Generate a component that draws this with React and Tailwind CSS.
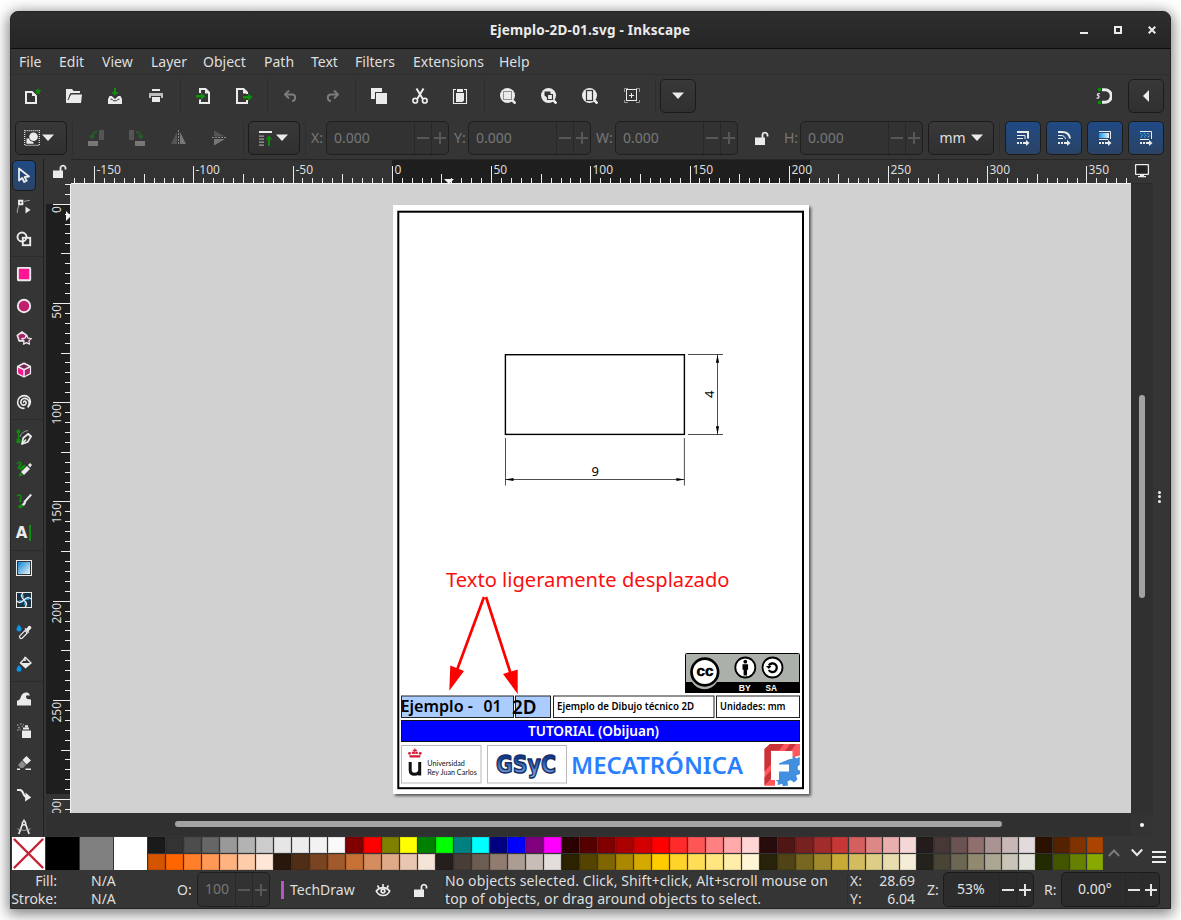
import React from "react";

const FG = "#ebebeb";
const GREEN = "#0d8f0d";

function Svg({ children, className = "w-4 h-4", box = "0 0 16 16" }) {
  return (
    <svg className={`block shrink-0 ${className}`} viewBox={box} fill="none">
      {children}
    </svg>
  );
}

const dashArrow = (
  <>
    <path d="M2 13h2M5 13h2M8 13h4" stroke={FG} strokeWidth="2" />
    <path d="M11 10l3.500 3-3.500 3z" fill={FG} />
  </>
);

const icons = {
  fileNew: (
    <Svg>
      <path d="M1 4h6l4 4v7H1z" stroke={FG} strokeWidth="2" />
      <path d="M7 4v4h4z" fill={FG} />
      <path d="M13 0l1 2.100 2.300.3-1.700 1.600.5 2.400-2.100-1.200-2.100 1.200.5-2.400L9.700 2.400l2.300-.3z" fill={GREEN} />
    </Svg>
  ),
  open: (
    <Svg>
      <path d="M0 1h6l1.500 2H14v2H4.500L3 8.500v4L0 15z" fill={FG} />
      <path d="M5 6.500h11L15 15H0z" fill={FG} />
      <path d="M4.500 6l-2.500 6" stroke="#353535" strokeWidth="1" />
    </Svg>
  ),
  save: (
    <Svg>
      <path d="M7 0h2v4h2.700L8 7.800 4.300 4H7z" fill={GREEN} />
      <path d="M2.500 8h2.200L8 11l3.300-3h2.200L15 11v5H1v-5z" fill={FG} />
      <path d="M3.500 11.200h1.500l1.500 1.600h3l1.500-1.600h1.500" stroke="#353535" strokeWidth="1" />
    </Svg>
  ),
  print: (
    <Svg>
      <path d="M4 1h8v2H4z" fill={FG} />
      <path d="M1 5h14v5h-2V8H3v2H1z" fill="#bdbdbd" />
      <path d="M4 9h8v5H4z" fill={FG} />
    </Svg>
  ),
  importIcon: (
    <Svg>
      <path d="M4 5V1h5.500L13 4.500V15H4v-3.500" stroke={FG} strokeWidth="2" />
      <path d="M9 1v4.500h5z" fill={FG} />
      <path d="M0 7h5V4.500l4.500 3.700L5 12V9.400H0z" fill={GREEN} />
    </Svg>
  ),
  exportIcon: (
    <Svg>
      <path d="M11 6V4.500L7.500 1H1v14h10v-3" stroke={FG} strokeWidth="2" />
      <path d="M7 1v4.500h5z" fill={FG} />
      <path d="M7 8h5V5.500l4.500 3.700L12 13v-2.600H7z" fill={GREEN} />
    </Svg>
  ),
  undo: (
    <Svg>
      <path d="M3 6.500h6.500a3.300 3.300 0 0 1 0 6.500H9" stroke="#7c7c7c" strokeWidth="1.900" />
      <path d="M6 2.500L2 6.500l4 4" stroke="#7c7c7c" strokeWidth="1.900" />
    </Svg>
  ),
  redo: (
    <Svg>
      <path d="M13 6.500H6.500a3.300 3.300 0 0 0 0 6.500H7" stroke="#7c7c7c" strokeWidth="1.900" />
      <path d="M10 2.500l4 4-4 4" stroke="#7c7c7c" strokeWidth="1.900" />
    </Svg>
  ),
  copy: (
    <Svg>
      <path d="M0 0h11v4H4v7H0z" fill={FG} />
      <path d="M5 5h11v11H5z" fill={FG} />
    </Svg>
  ),
  cut: (
    <Svg>
      <path d="M4.500 .5L10.800 11M11.500 .5L5.200 11" stroke={FG} strokeWidth="2" />
      <circle cx="3.200" cy="12.700" r="2.300" stroke={FG} strokeWidth="1.700" />
      <circle cx="12.800" cy="12.700" r="2.300" stroke={FG} strokeWidth="1.700" />
    </Svg>
  ),
  paste: (
    <Svg>
      <path d="M4 1.500H1.500v14h13v-14H12" stroke={FG} strokeWidth="1.100" />
      <path d="M4 5h8v7.500L10.500 14H4zM5 1h6v3H5z" fill={FG} />
    </Svg>
  ),
  zoomSel: (
    <Svg>
      <circle cx="7.500" cy="7.500" r="7.500" fill={FG} />
      <path d="M12 12l3.500 3.500" stroke={FG} strokeWidth="2.600" />
      <rect x="3.500" y="3.500" width="8" height="8" stroke="#353535" strokeDasharray="1 1" />
    </Svg>
  ),
  zoomDraw: (
    <Svg>
      <circle cx="7.500" cy="7.500" r="7.500" fill={FG} />
      <path d="M12 12l3.500 3.500" stroke={FG} strokeWidth="2.600" />
      <path d="M3.500 3.500h6v2.500H6v3.500L3.500 7.500z" fill="#353535" />
      <path d="M6.500 6.500h5v5h-5z" fill={FG} stroke="#353535" strokeWidth="1.200" />
    </Svg>
  ),
  zoomPage: (
    <Svg>
      <circle cx="7.500" cy="7.500" r="7.500" fill={FG} />
      <path d="M12 12l3.500 3.500" stroke={FG} strokeWidth="2.600" />
      <rect x="4.500" y="2.500" width="6" height="10" stroke="#353535" strokeWidth="1.200" />
    </Svg>
  ),
  zoomCenter: (
    <Svg>
      <path d="M.5 4V.5H4M12 .5h3.500V4M15.500 12v2.500H12M4 14.500H.5V12" stroke="#9a9a9a" />
      <rect x="2.500" y="1.500" width="10" height="11" stroke={FG} />
      <path d="M7.500 5v5M5 7.500h5" stroke={FG} strokeWidth="1" />
    </Svg>
  ),
  snap: (
    <Svg>
      <path d="M6 1.700h3a6.200 6.200 0 0 1 0 12.600H6" stroke={FG} strokeWidth="3" />
      <path d="M2 0h3v3H2zM2 13h3v3H2z" fill={GREEN} />
      <path d="M3.800 5.700C1.300 5.300.8 7 2.200 7.700S3.300 10.300.6 10" stroke={FG} strokeWidth="1.300" />
    </Svg>
  ),
  selectMode: (
    <Svg>
      <rect x=".7" y=".7" width="14.600" height="14.600" stroke={FG} strokeWidth="1.200" strokeDasharray="1 1" />
      <circle cx="9.500" cy="6.800" r="4.300" fill={FG} />
      <path d="M2.500 8.500h2.500c.5 2 2 3.200 4.500 3.500v1.800h-7z" fill={FG} />
    </Svg>
  ),
  rotateL: (
    <Svg>
      <path d="M11 0h5v10h-5z" fill="#555" />
      <path d="M0 11h10v5H0z" fill="#777" />
      <path d="M4 8C4 4 5.500 2 9 2" stroke="#275c27" strokeWidth="1.800" />
      <path d="M1 5.500h6.500L4 9.500z" fill="#275c27" />
    </Svg>
  ),
  rotateR: (
    <Svg>
      <path d="M0 0h5v10H0z" fill="#555" />
      <path d="M6 11h10v5H6z" fill="#777" />
      <path d="M7 2c3.500 0 5 2 5 6" stroke="#275c27" strokeWidth="1.800" />
      <path d="M8.500 5.500H15l-3.500 4z" fill="#275c27" />
    </Svg>
  ),
  flipH: (
    <Svg>
      <path d="M6 2v12H0z" fill="#555" />
      <path d="M9 2v12h6z" fill="#777" />
      <path d="M7.500 0v15" stroke="#8a8a8a" strokeDasharray="2 1" />
    </Svg>
  ),
  flipV: (
    <Svg>
      <path d="M3 .5v6h11z" fill="#555" />
      <path d="M3 9v6.500l11-6.500z" fill="#777" />
      <path d="M1 7.500h14" stroke="#8a8a8a" strokeDasharray="2 1" />
    </Svg>
  ),
  raise: (
    <Svg>
      <path d="M1 2h13" stroke={FG} strokeWidth="2" />
      <path d="M1 6.200h5M1 9.200h5M1 12.200h5M1 15.200h5" stroke="#a0a0a0" strokeWidth="1.300" />
      <path d="M10 16V9.500H8l3-4.500 3 4.500h-2V16z" fill={GREEN} />
    </Svg>
  ),
  lock: (
    <Svg>
      <path d="M1 7.500h10V15H1z" fill={FG} />
      <path d="M8.500 8V4.500a2.600 2.600 0 0 1 5 0V6.500" stroke={FG} strokeWidth="1.800" />
    </Svg>
  ),
  monitor: (
    <Svg>
      <rect x="1.600" y="1.600" width="12.800" height="9.800" rx=".5" fill="#222" stroke={FG} strokeWidth="1.300" />
      <path d="M6 12h4v1h2v1.200H4V13h2z" fill={FG} />
    </Svg>
  ),
  selector: (
    <Svg>
      <path d="M3 1.500v12l3.200-2.500 2 4 2.500-1.200-2-3.800 4.300-.5z" stroke={FG} strokeWidth="1.800" strokeLinejoin="round" />
    </Svg>
  ),
  node: (
    <Svg>
      <path d="M3 1.800h3.400v3.400H3z" stroke={FG} strokeWidth="1.900" />
      <path d="M3 6C1.800 8.500 1.300 11 1.300 14M8 2.500c3-.8 4.500-1 6-1.200" stroke="#9a9a9a" strokeWidth="1.100" />
      <path d="M9.500 7.500l5 3.500-5 3.500z" fill={FG} />
    </Svg>
  ),
  builder: (
    <Svg>
      <circle cx="6" cy="6" r="4.500" stroke={FG} strokeWidth="1.900" />
      <rect x="6.800" y="6.800" width="7.400" height="7.400" stroke={FG} strokeWidth="1.900" />
    </Svg>
  ),
  rect: (
    <Svg>
      <rect x="1.900" y="1.900" width="12.300" height="12.300" rx=".5" fill="#ff1493" stroke={FG} strokeWidth="1.900" />
    </Svg>
  ),
  circle: (
    <Svg>
      <circle cx="8" cy="8" r="6.200" fill="#c2206f" stroke={FG} strokeWidth="1.900" />
    </Svg>
  ),
  star: (
    <Svg>
      <path d="M6 2l4.700 3.400-1.800 5.500H3.200L1.300 5.400z" fill="#a8246b" stroke={FG} strokeWidth="1.600" strokeLinejoin="round" />
      <path d="M10.500 5.200l1.500 2.900 3.300.5-2.400 2.300.6 3.300-3-1.600-3 1.600.6-3.300-2.400-2.300 3.300-.5z" fill="#5a2748" stroke={FG} strokeWidth="1.200" strokeLinejoin="round" />
    </Svg>
  ),
  cube: (
    <Svg>
      <path d="M8 1.200l6.300 3.300v7L8 14.900l-6.300-3.400v-7z" fill="#7a2355" stroke={FG} strokeWidth="1.600" strokeLinejoin="round" />
      <path d="M2.300 5.200L8 8v6.300l-5.700-3.100z" fill="#ff1493" />
      <path d="M13.700 5.200L8 8v6.300l5.700-3.100z" fill="#a8246b" />
      <path d="M2 4.700L8 7.700l6-3M8 7.700v7" stroke={FG} strokeWidth="1.600" />
    </Svg>
  ),
  spiral: (
    <Svg>
      <path
        d="M8 8.700c-.9-.7 0-2 1.200-1.500 1.700.8 1.100 3.300-.6 3.800-2.400.7-4.300-1.500-3.700-3.800.8-2.700 4-3.600 6.300-2.100 2.600 1.800 2.600 5.600.5 7.700M8.600 14.300c-4 .6-7-2.300-7-6 0-3.800 3-6.800 6.800-6.700 3.500.1 6.100 3 6 6.400-.1 2.400-1 4.200-2.700 5.500"
        stroke={FG}
        strokeWidth="1.600"
      />
    </Svg>
  ),
  pen: (
    <Svg>
      <path d="M2.500 3v10" stroke={GREEN} strokeWidth="1.500" />
      <circle cx="2.500" cy="2.500" r="2" fill={GREEN} />
      <path d="M.5 10h4v4h-4z" fill={GREEN} />
      <path d="M4 8c1-4 3.500-5.500 8-6.500" stroke="#999" />
      <path d="M6 15l1.200-6 4.800-4 3 2.500-3.300 5.500z" stroke={FG} strokeWidth="1.700" strokeLinejoin="round" />
      <path d="M6 15l4-4.500M12 4.500l3.500 3.500" stroke={FG} strokeWidth="1.600" />
    </Svg>
  ),
  pencil: (
    <Svg>
      <path d="M1 3c2-2.500 5-2 3.500.5S1 7 3 7.500 7 4 8.500 4.500 5 8 4.500 9.500" stroke={GREEN} strokeWidth="1.500" />
      <path d="M5 11l6-6 3 3-6 6z" fill={FG} />
      <path d="M12 4l2-2 2 2-2 2.500z" fill={FG} />
      <path d="M2.500 15.500l1.300-4.300L7.300 14.500z" fill={GREEN} />
    </Svg>
  ),
  brush: (
    <Svg>
      <path d="M1 3c2.500-2 4.500-.5 4 1.500S3 8 5 9" stroke={GREEN} strokeWidth="1.500" />
      <path d="M8 9.500L15.200 1.500" stroke={FG} strokeWidth="2" />
      <path d="M5.500 11.500L9 8.500l1.200 1.200L8 13z" fill={FG} />
      <path d="M2 14.500c.5-2.500 2-3.500 3.500-3l2 2c-1 1.500-3 2-5.500 1z" fill={GREEN} />
    </Svg>
  ),
  text: (
    <span className="-ml-px flex items-center gap-[2px]">
      <span className="font-['DejaVu_Sans',sans-serif] text-[15px] leading-none font-black text-[#ebebeb]">A</span>
      <span className="h-4 w-[2px] bg-[#0d8f0d]" />
    </span>
  ),
  gradient: (
    <Svg>
      <defs>
        <linearGradient id="gr" x1="0" y1="0" x2="1" y2="1">
          <stop offset="0" stopColor="#0a84d0" />
          <stop offset="1" stopColor="#eef6fa" />
        </linearGradient>
      </defs>
      <rect x=".5" y=".5" width="15" height="15" stroke={FG} />
      <rect x="2" y="2" width="12" height="12" fill="url(#gr)" />
    </Svg>
  ),
  mesh: (
    <Svg>
      <rect x=".5" y=".5" width="15" height="15" fill="#1a3442" stroke={FG} />
      <path d="M8 8l-4-5h4zM8 8l5-4v4zM8 8l4 5H8zM8 8l-5 4V8z" fill="#1d8fd0" />
      <path d="M8 8C5 5.500 5 3 7 .8M8 8c2.500-3 5-3 7.200-1M8 8c3 2.500 3 5 1 7.200M8 8c-2.500 3-5 3-7.200 1" stroke={FG} strokeWidth="1.300" />
    </Svg>
  ),
  dropper: (
    <Svg>
      <path d="M3 .5c1.500 2 2.500 3.300 2.500 4.500a2.500 2.500 0 0 1-5 0C.5 3.800 1.500 2.500 3 .5z" fill="#0b93e8" />
      <path d="M4 14c-.8-.8-.5-1.800 0-2.300l5-5 2.300 2.300-5 5c-.6.500-1.600.7-2.300 0z" stroke={FG} strokeWidth="1.200" />
      <path d="M8.500 5l1-1 1 .8L12.500 2c1-1 3.500.5 2.700 2.500L12.500 7l.8 1-1 1z" fill={FG} />
    </Svg>
  ),
  bucket: (
    <Svg>
      <path d="M3 9c1.500 2 2.500 3.200 2.500 4.300a2.500 2.500 0 0 1-5 0C.5 12.200 1.500 11 3 9z" fill="#0b93e8" />
      <path d="M9.500 1.500L15 7l-5.500 4.500L4.500 7z" stroke={FG} strokeWidth="1.400" />
      <path d="M5 7h10l-5.500 4.700zM8.500 0L10 5H8z" fill={FG} />
    </Svg>
  ),
  tweak: (
    <Svg>
      <path d="M1 14.500V9.500c3 0 3-2 4-4C6 2.500 8.500 1 11 1.500c2 .4 3 2 2.500 3.500-1-1.300-3.500-1-3.500.8C10 8 12 8.500 15 8.500v6z" fill={FG} />
    </Svg>
  ),
  spray: (
    <Svg>
      <path d="M6 7.500h9V15H6zM7 4.500h6v2H7zM9 2.200h3v2H9z" fill={FG} />
      <path d="M1 2h1.500M4 1h1.500M2 4.500h2M1 7h1.500M5.500 3.500H7M3.500 6.500H5M7 1.500h1" stroke="#8a8a8a" strokeWidth="1.400" />
    </Svg>
  ),
  eraser: (
    <Svg>
      <path d="M10.500 1L15 5.500l-4.500 4L6.500 5z" fill={FG} />
      <path d="M6 5.500L10 10l-3 3H4.500L2 10z" fill="#8c8c8c" />
      <path d="M1 14.200h3M9.500 14.200H15" stroke={FG} strokeWidth="1.600" />
    </Svg>
  ),
  connector: (
    <Svg>
      <path d="M1 3h3c4 0 2.500 7 7 7.500" stroke={FG} strokeWidth="2" />
      <path d="M9.500 5.500l5.700 5-6.200 4z" fill={FG} />
    </Svg>
  ),
  measure: (
    <Svg>
      <path d="M6.700 4.500L2.800 15M9.300 4.500L13.200 15M8 .5v2" stroke={FG} strokeWidth="1.700" />
      <circle cx="8" cy="4.200" r="1.700" stroke={FG} strokeWidth="1.500" />
      <path d="M1.500 9.800c4 2 9 2 13 0" stroke="#aaa" />
    </Svg>
  ),
  scaleStroke: (
    <Svg>
      <path d="M2 2h11v6.500" stroke={FG} strokeWidth="2" />
      <path d="M2 5.500h8V9M2 8.500h6" stroke={FG} strokeWidth="1" />
      {dashArrow}
    </Svg>
  ),
  scaleCorner: (
    <Svg>
      <path d="M2 2h4c5 0 7.500 2 8 6.500" stroke={FG} strokeWidth="2" />
      <path d="M2 5.500h3c2.500 0 4 1 4.500 3.500M2 8.500h5" stroke={FG} strokeWidth="1" />
      {dashArrow}
    </Svg>
  ),
  scaleGradient: (
    <Svg>
      <defs>
        <linearGradient id="gs">
          <stop offset="0" stopColor="#1597e8" />
          <stop offset="1" stopColor="#e8f4fa" />
        </linearGradient>
      </defs>
      <path d="M2 1.500h11.500V9M2 9.500h9" stroke={FG} strokeWidth="1" />
      <path d="M2 3h10v5H2z" fill="url(#gs)" />
      {dashArrow}
    </Svg>
  ),
  scalePattern: (
    <Svg>
      <path d="M2 1.500h11.500V9M2 9.500h9" stroke={FG} strokeWidth="1" />
      <path d="M2.500 3l2 2.500-2 2.500M6 3l2 2.500L6 8" stroke="#2aa0ee" strokeWidth="1.400" strokeDasharray="1.500 .7" />
      <path d="M9.500 3l2 2.500-2 2.500" stroke={FG} strokeDasharray="1 1" />
      {dashArrow}
    </Svg>
  ),
  eye: (
    <Svg>
      <path d="M1.300 9c1.300 3 3.700 4.500 6.700 4.500s5.400-1.500 6.700-4.500c-1.900-2.300-4-3.300-6.700-3.300S3.200 6.700 1.300 9z" stroke={FG} strokeWidth="1.700" />
      <circle cx="8" cy="9" r="2.700" fill={FG} />
      <circle cx="8" cy="9" r="1" fill="#353535" />
      <path d="M2.500 3.500L4 6M8 2v3M13.500 3.500L12 6" stroke={FG} strokeWidth="1.600" />
    </Svg>
  ),
  caret: (
    <Svg className="w-3 h-3" box="0 0 12 12">
      <path d="M0 2.500h12L6 9z" fill={FG} />
    </Svg>
  ),
};

function Sep({ w = "w-2" }) {
  return (
    <div className={`flex shrink-0 justify-center self-stretch py-1 ${w}`}>
      <div className="w-px bg-[#2e2e2e]" />
    </div>
  );
}

function Cell({ icon, w, align = "justify-center" }) {
  return <div className={`flex shrink-0 items-center ${align} ${w}`}>{icons[icon]}</div>;
}

function Command({ icon, w = "w-4" }) {
  return <Cell icon={icon} w={w} align="justify-start" />;
}

const btn =
  "flex h-[34px] shrink-0 items-center justify-center rounded-[5px] border border-[#1b1b1b] bg-linear-to-b from-[#383838] to-[#303030]";
const blueBtn =
  "flex h-[34px] w-9 shrink-0 items-center justify-center rounded-[5px] border border-[#1b1b1b] bg-linear-to-b from-[#1f4a85] to-[#2a4365]";

function Spin({ w, value, valueClass = "pl-[7px]", on = false, h = "h-[34px]" }) {
  const bar = on ? "bg-[#e4e4e4]" : "bg-[#575757]";
  return (
    <div
      className={`flex shrink-0 items-stretch rounded-[5px] border ${h} ${w} ${
        on ? "border-[#1b1b1b] bg-[#2c2c2c] text-[#e2e2e2]" : "border-[#1f1f1f] bg-[#323232] text-[#777]"
      }`}
    >
      <div className={`flex flex-1 items-center pb-[2px] whitespace-nowrap ${valueClass}`}>{value}</div>
      <div className="flex w-[17px] items-center justify-center border-l border-[#282828]">
        <div className={`h-[2px] w-3 ${bar}`} />
      </div>
      <div className="grid w-[17px] place-items-center border-l border-[#282828]">
        <div className={`col-start-1 row-start-1 h-[2px] w-3 ${bar}`} />
        <div className={`col-start-1 row-start-1 h-3 w-[2px] ${bar}`} />
      </div>
    </div>
  );
}

const menus = [
  ["File", "w-[40px]"],
  ["Edit", "w-[43px]"],
  ["View", "w-[49px]"],
  ["Layer", "w-[52px]"],
  ["Object", "w-[61px]"],
  ["Path", "w-[47px]"],
  ["Text", "w-[44px]"],
  ["Filters", "w-[58px]"],
  ["Extensions", "w-[86px]"],
  ["Help", "w-[40px]"],
];

const row1 =
  "1a1a1a 333333 4d4d4d 666666 999999 b3b3b3 cccccc e6e6e6 ececec f2f2f2 f9f9f9 800000 ff0000 808000 ffff00 008000 00ff00 008080 00ffff 000080 0000ff 800080 ff00ff 2b0000 550000 800000 aa0000 d40000 ff0000 ff2a2a ff5555 ff8080 ffaaaa ffd5d5 280b0b 501616 782121 a02c2c c83737 d35f5f de8787 e9afaf f4d7d7 241c1c 483737 6c5353 916f6f ac9393 c8b7b7 e3dbdb 2b1100 552200 803300 aa4400".split(" ");
const row2 =
  "d45500 ff6600 ff7f2a ff9955 ffb380 ffccaa ffe6d5 28170b 502d16 784421 a05a2c c87137 d38d5f deaa87 e9c6af f4e3d7 241f1c 483e37 6c5d53 917c6f ac9d93 c8beb7 e3dedb 2b2200 554400 806600 aa8800 d4aa00 ffcc00 ffd42a ffdd55 ffe680 ffeeaa fff6d5 28220b 504416 786721 a0892c c8ab37 d3bc5f decd87 e9ddaf f4eed7 24221c 484537 6c6753 918a6f aca793 c8c4b7 e3e2db 222b00 445500 668000 88aa00".split(" ");

function Swatches({ colors }) {
  return (
    <div className="flex h-4">
      {colors.map((c, i) => (
        <div key={i} className={`h-4 shrink-0 pr-px ${i < 38 ? "w-[18px]" : "w-[17px]"}`}>
          <div className="h-full border border-black/10" style={{ backgroundColor: `#${c}` }} />
        </div>
      ))}
    </div>
  );
}

const STEP = 9.924;
const tickLen = (k) => (k % 10 === 0 ? 17 : k % 5 === 0 ? 9 : 5);

function HRuler() {
  const ks = [];
  for (let k = -32; k <= 74; k++) ks.push(k);
  return (
    <svg className="block h-[25px] w-[1060px]" viewBox="71 159 1060 25" fontFamily="Noto Sans, sans-serif">
      <rect x="71" y="159" width="1060" height="25" fill="#333333" />
      <rect x="392" y="160" width="418" height="24" fill="#1e1e1e" />
      <rect x="71" y="159" width="1060" height="1" fill="#262626" />
      {ks.map((k) => {
        const x = Math.floor(392.300 + k * STEP);
        return <rect key={k} x={x} y={183 - tickLen(k)} width="1" height={tickLen(k)} fill="#ededed" />;
      })}
      {[-150, -100, -50, 0, 50, 100, 150, 200, 250, 300, 350].map((v) => (
        <text key={v} x={Math.floor(392.300 + (v / 5) * STEP) + 2.500} y="174" fontSize="12" fill="#dcdcdc">
          {v}
        </text>
      ))}
      <path d="M444 179h10l-5 5z" fill="#f2f2f2" />
      <rect x="71" y="183" width="1060" height="1" fill="#f2f2f2" />
    </svg>
  );
}

function VRuler() {
  const ks = [];
  for (let k = -2; k <= 61; k++) ks.push(k);
  return (
    <svg className="block h-[629px] w-[25px]" viewBox="46 184 25 629" fontFamily="Noto Sans, sans-serif">
      <rect x="46" y="184" width="25" height="629" fill="#333333" />
      <rect x="46" y="204" width="25" height="590" fill="#1e1e1e" />
      {ks.map((k) => {
        const y = Math.floor(204.200 + k * STEP);
        return <rect key={k} x={70 - tickLen(k)} y={y} width={tickLen(k)} height="1" fill="#ededed" />;
      })}
      {[0, 50, 100, 150, 200, 250, 300].map((v) => (
        <text
          key={v}
          transform={`translate(61 ${Math.floor(204.200 + (v / 5) * STEP) + 2}) rotate(-90)`}
          textAnchor="end"
          fontSize="12"
          fill="#dcdcdc"
        >
          {v}
        </text>
      ))}
      <path d="M66 211l5 5-5 5z" fill="#f2f2f2" />
      <rect x="70" y="184" width="1" height="629" fill="#f2f2f2" />
    </svg>
  );
}

function Drawing() {
  return (
    <svg className="block h-[629px] w-[1060px] bg-[#d1d1d1]" viewBox="71 184 1060 629" fontFamily="Noto Sans, sans-serif">
      <defs>
        <filter id="sh" x="-5%" y="-5%" width="110%" height="110%">
          <feDropShadow dx="2" dy="2" stdDeviation="1.800" floodColor="#000" floodOpacity=".6" />
        </filter>
        <linearGradient id="gsyc" x1="0" y1="0" x2="0" y2="1">
          <stop offset=".25" stopColor="#0b3d91" />
          <stop offset=".9" stopColor="#7fb0e8" />
        </linearGradient>
      </defs>
      <rect x="393" y="205" width="416" height="589" fill="#fff" filter="url(#sh)" />
      <rect x="398.300" y="211.700" width="404.700" height="576.500" stroke="#000" strokeWidth="2" fill="none" />

      <rect x="505.400" y="354.700" width="179" height="79.700" stroke="#000" strokeWidth="1.400" fill="none" />
      <g stroke="#222" strokeWidth=".8">
        <path d="M505.500 438v47.500M684.400 438v47.500M505.500 479.500h179M688 354.500h35M688 434.500h35M717.500 354.500v80" />
      </g>
      <path d="M505.500 479.500l8-1.600v3.200zM684.400 479.500l-8-1.600v3.200zM717.500 354.700l-1.600 8h3.200zM717.500 434.300l-1.600-8h3.200z" fill="#000" />
      <text x="591.500" y="476" fontSize="13">9</text>
      <text transform="translate(714 398) rotate(-90)" fontSize="13">4</text>

      <text x="446" y="587" fontSize="20" fill="#fa0f0f" textLength="283.500" lengthAdjust="spacingAndGlyphs">
        Texto ligeramente desplazado
      </text>

      <rect x="401.500" y="696" width="112" height="21.500" fill="#aaccff" stroke="#222" />
      <rect x="515.500" y="696" width="35" height="21.500" fill="#aaccff" stroke="#222" />
      <rect x="553.500" y="696" width="160.500" height="21.500" fill="#fff" stroke="#222" />
      <rect x="716.500" y="696" width="83" height="21.500" fill="#fff" stroke="#222" />
      <g fontWeight="600">
        <text x="400.500" y="711.500" fontSize="16.500" textLength="72.500" lengthAdjust="spacingAndGlyphs">Ejemplo -</text>
        <text x="483.500" y="712" fontSize="16" textLength="18" lengthAdjust="spacingAndGlyphs">01</text>
        <text x="512" y="713.500" fontSize="19" textLength="24.500" lengthAdjust="spacingAndGlyphs">2D</text>
        <text x="557" y="710" fontSize="10" textLength="137" lengthAdjust="spacingAndGlyphs">Ejemplo de Dibujo técnico 2D</text>
        <text x="720" y="710" fontSize="10" textLength="65.500" lengthAdjust="spacingAndGlyphs">Unidades: mm</text>
        <rect x="401.500" y="720.500" width="398" height="21" fill="#0000fe" stroke="#111" />
        <text x="528" y="736" fontSize="13.500" fill="#fff" textLength="131" lengthAdjust="spacingAndGlyphs">TUTORIAL (Obijuan)</text>
        <text x="571" y="774" fontSize="22.500" fill="#2a7fff" textLength="172" lengthAdjust="spacingAndGlyphs">MECATRÓNICA</text>
      </g>
      <path d="M484 597L457 670M486 597L510.500 673" stroke="#fe0000" strokeWidth="2.700" />
      <path d="M449.300 690.700L450.300 665.500 464 671zM517.700 694L503 674 517.700 669.500z" fill="#fe0000" />

      <rect x="401.500" y="745.500" width="79.500" height="37.500" fill="#fff" stroke="#b9b9b9" />
      <rect x="487.500" y="745.500" width="79" height="37.500" fill="#fff" stroke="#b9b9b9" />

      <g fill="#d41a35">
        <path d="M409.800 757.500l-.6-2.300h11.400l-.6 2.300z" />
        <circle cx="409.500" cy="753.300" r="1.400" />
        <circle cx="413" cy="752.700" r="1.300" />
        <circle cx="416.700" cy="752.700" r="1.300" />
        <circle cx="420.200" cy="753.300" r="1.400" />
        <path d="M414.200 748.500h1.300v5.500h-1.300zM412.800 749.700h4.100v1.200h-4.100z" />
      </g>
      <path d="M410.200 762v8q0 4.300 4.200 4.300t5.300-3.300v-9M419.700 762v13.500" stroke="#111" strokeWidth="3" fill="none" />
      <g fontFamily="Lato, sans-serif" fontSize="8" fill="#111">
        <text x="427.300" y="765.500" textLength="37.500" lengthAdjust="spacingAndGlyphs">Universidad</text>
        <text x="427.300" y="775" textLength="49.500" lengthAdjust="spacingAndGlyphs">Rey Juan Carlos</text>
      </g>
      <text
        x="496"
        y="772.500"
        fontFamily="DejaVu Sans, sans-serif"
        fontWeight="bold"
        fontSize="24"
        fill="url(#gsyc)"
        stroke="#1b2d66"
        strokeWidth="1.500"
        strokeLinejoin="round"
        textLength="60"
        lengthAdjust="spacingAndGlyphs"
      >
        GSyC
      </text>

      <path d="M770 744h30v11.500l-8 2h-17v28.200h-10.500v-36.700z" fill="#ff585d" />
      <path d="M770 744h14l-5 6.500h-8v14l-6.500 7v-22.500z" fill="#cb333b" />
      <path d="M790 744h6l-5 7h-6z" fill="#cb333b" />
      <path d="M764.500 777.500l6.500-7v8l-6.500 7z" fill="#cb333b" />
      <path d="M778 782l-3-2.500V765l16-6.500 2.500-2.500 3 2.500 3.300-1.700v8l-2 1.500v3.500l2.200.7v3.500l-4 1.500 1.500 4-3.500 3-3.500-2.500-3 1.500.5 4-5 .8-1-2.500-4.500 1.500z" fill="#418fde" />
      <path d="M771 751h21.500v8H779v5.500h10v7h-10v8.500h-8z" fill="#fff" />

      <rect x="685.500" y="653.500" width="114" height="39" rx="1" fill="#abb1aa" stroke="#000" />
      <path d="M685 682h7a14.500 14.500 0 0 0 25 0h83v11H685z" fill="#000" />
      <circle cx="704.800" cy="672" r="13.300" fill="#fff" stroke="#000" strokeWidth="2.700" />
      <g fontFamily="Liberation Sans, sans-serif" fontWeight="bold">
        <text x="696.500" y="676" fontSize="15" textLength="17" lengthAdjust="spacingAndGlyphs" stroke="#000" strokeWidth=".5">cc</text>
        <text x="738.800" y="691" fontSize="8.500" fill="#fff" textLength="12" lengthAdjust="spacingAndGlyphs">BY</text>
        <text x="765.500" y="691" fontSize="8.500" fill="#fff" textLength="11.500" lengthAdjust="spacingAndGlyphs">SA</text>
      </g>
      <circle cx="745.300" cy="667.500" r="10" fill="#fff" stroke="#000" strokeWidth="1.800" />
      <circle cx="745.300" cy="661.700" r="1.900" fill="#000" />
      <path d="M742.500 664.300h5.600v5.500H747v5.700h-3.400v-5.700h-1.100z" fill="#000" />
      <circle cx="772.500" cy="667.500" r="10" fill="#fff" stroke="#000" strokeWidth="1.800" />
      <path d="M768.800 665.500a4.300 4.300 0 1 1 0 4.500" stroke="#000" strokeWidth="2.300" fill="none" />
      <path d="M766 666h5.500l-2.700 3z" fill="#000" />
    </svg>
  );
}

const tools = [
  ["node", "builder"],
  ["rect", "circle", "star", "cube", "spiral"],
  ["pen", "pencil", "brush", "text"],
  ["gradient", "mesh", "dropper", "bucket"],
  ["tweak", "spray", "eraser", "connector", "measure"],
];

export default function App() {
  return (
    <div className="h-[920px] w-[1181px] overflow-hidden bg-white pt-[11px] pl-[10px] font-['Noto_Sans',sans-serif] text-[14px] text-[#dfdfdf]">
      <div className="flex h-[898px] w-[1161px] flex-col overflow-hidden rounded-t-[8px] border border-[#242424] bg-[#353535] shadow-[0_3px_14px_2px_rgba(0,0,0,0.5)]">
        <div className="flex h-[37px] shrink-0 items-center border-b border-[#0c0c0c] bg-linear-to-b from-[#2e2e2e] to-[#252525]">
          <div className="w-[1050px] shrink-0 pl-[108px] text-center text-[13.500px] font-bold text-[#ebebeb]">
            <span className="tracking-[0.22px] whitespace-nowrap">Ejemplo-2D-01.svg - Inkscape</span>
          </div>
          <div className="flex shrink-0 items-center">
            <div className="flex w-[46px] justify-center pt-[5px]">
              <div className="h-[2px] w-2 bg-[#ebebeb]" />
            </div>
            <div className="flex w-[22px] justify-center">
              <div className="size-2 border-2 border-[#ebebeb]" />
            </div>
            <div className="flex w-[46px] shrink-0 justify-center">
              <Svg className="size-2" box="0 0 8 8">
                <path d="M.7 .7l6.600 6.600M7.300 .7L.7 7.300" stroke={FG} strokeWidth="2" />
              </Svg>
            </div>
          </div>
        </div>

        <div className="flex h-[26px] shrink-0 items-center border-b border-[#2e2e2e] pl-2">
          {menus.map(([m, w]) => (
            <div key={m} className={`${w} shrink-0 whitespace-nowrap`}>
              {m}
            </div>
          ))}
        </div>

        <div className="flex h-[42px] shrink-0 items-center pl-[14px]">
          <Command icon="fileNew" w="w-[41px]" />
          <Command icon="open" w="w-[41px]" />
          <Command icon="save" w="w-[41px]" />
          <Command icon="print" />
          <Sep w="w-8" />
          <Command icon="importIcon" w="w-10" />
          <Command icon="exportIcon" />
          <Sep w="w-[31px]" />
          <Command icon="undo" w="w-[41px]" />
          <Command icon="redo" />
          <Sep w="w-[31px]" />
          <Command icon="copy" w="w-[41px]" />
          <Command icon="cut" w="w-10" />
          <Command icon="paste" />
          <Sep w="w-8" />
          <Command icon="zoomSel" w="w-[41px]" />
          <Command icon="zoomDraw" w="w-[41px]" />
          <Command icon="zoomPage" w="w-[42px]" />
          <Command icon="zoomCenter" />
          <Sep w="w-[30px] -mr-[10px]" />
          <div className={`${btn} w-9`}>{icons.caret}</div>
          <div className="ml-auto flex items-center pr-[6px]">
            <Cell icon="snap" w="w-12" />
            <div className={`${btn} w-9`}>
              <Svg className="h-3 w-3" box="0 0 12 12">
                <path d="M9 0v12L3 6z" fill={FG} />
              </Svg>
            </div>
          </div>
        </div>

        <div className="flex h-[42px] shrink-0 items-center text-[#777]">
          <div className={`${btn} ml-1 w-[52px] gap-[2px] pr-[4px]`}>
            {icons.selectMode}
            {icons.caret}
          </div>
          <Sep w="w-[10px]" />
          <Cell icon="rotateL" w="w-[38px]" />
          <Cell icon="rotateR" w="w-[44px]" />
          <Cell icon="flipH" w="w-[40px]" />
          <Cell icon="flipV" w="w-[40px]" />
          <Sep w="w-[9px]" />
          <div className={`${btn} w-[52px] gap-[2px] pr-[2px]`}>
            {icons.raise}
            {icons.caret}
          </div>
          <Sep w="w-[11px]" />
          <div className="w-[15px] pb-[2px]">X:</div>
          <Spin w="w-[123px]" value="0.000" />
          <div className="w-[19px] pb-[2px] pl-[5px]">Y:</div>
          <Spin w="w-[123px]" value="0.000" />
          <div className="w-[24px] pb-[2px] pl-[5px]">W:</div>
          <Spin w="w-[123px]" value="0.000" />
          <Cell icon="lock" w="w-[48px]" />
          <div className="-ml-[2px] w-[14px] pb-[2px]">H:</div>
          <div className="w-[2px]" />
          <Spin w="w-[123px]" value="0.000" />
          <div className={`${btn} ml-[5px] w-[66px] gap-[5px] text-[#e0e0e0]`}>
            <span className="pb-px">mm</span>
            {icons.caret}
          </div>
          <Sep w="w-[11px]" />
          <div className="flex gap-[5px]">
            <div className={blueBtn}>{icons.scaleStroke}</div>
            <div className={blueBtn}>{icons.scaleCorner}</div>
            <div className={blueBtn}>{icons.scaleGradient}</div>
            <div className={blueBtn}>{icons.scalePattern}</div>
          </div>
        </div>

        <div className="flex h-[677px] shrink-0 overflow-hidden">
          <div className="mr-[2px] h-full w-[33px] shrink-0 overflow-hidden border-r border-[#202020] pr-[6px]">
            <div className="flex h-8 items-center pl-px">
              <div className="flex h-[31px] w-[24px] items-center justify-center rounded-[5px] border border-[#1b1b1b] bg-linear-to-b from-[#1f4a85] to-[#2a4365]">
                {icons.selector}
              </div>
            </div>
            {tools.map((group, gi) => (
              <div key={gi}>
                {gi > 0 && (
                  <div className="flex h-[3px] items-center">
                    <div className="h-px w-[33px] shrink-0 bg-[#2c2c2c]" />
                  </div>
                )}
                {group.map((t) => (
                  <div key={t} className="flex h-8 items-center justify-center">
                    {icons[t]}
                  </div>
                ))}
              </div>
            ))}
          </div>

          <div className="flex w-[1107px] shrink-0 flex-col">
            <div className="flex h-[25px]">
              <div className="flex w-[25px] items-center pb-[2px] pl-[6px]">{icons.lock}</div>
              <HRuler />
              <div className="flex w-[22px] items-center justify-center border-y border-[#2a2a2a] pb-px">{icons.monitor}</div>
            </div>
            <div className="flex h-[629px]">
              <VRuler />
              <Drawing />
              <div className="w-[22px] bg-[#303030] pt-[211px] pl-2">
                <div className="h-[203px] w-[6px] rounded-full bg-[#a3a4a2]" />
              </div>
            </div>
            <div className="flex h-[23px] bg-[#303030]">
              <div className="w-[1085px] pt-2 pl-[129px]">
                <div className="h-[6px] w-[827px] rounded-full bg-[#a3a4a2]" />
              </div>
              <div className="flex w-[22px] items-center justify-center bg-[#333]">
                <div className="size-1 rounded-full bg-white" />
              </div>
            </div>
          </div>
          <div className="flex flex-1 flex-col items-center justify-center gap-[1.500px] pr-[5px] pb-[2px]">
            <div className="size-[3px] rounded-full bg-[#ededed]" />
            <div className="size-[3px] rounded-full bg-[#ededed]" />
            <div className="size-[3px] rounded-full bg-[#ededed]" />
          </div>
        </div>

        <div className="flex h-[35px] shrink-0 items-start pt-px pl-px">
          <div className="mr-px size-[33px] bg-white">
            <Svg className="size-[33px]" box="0 0 33 33">
              <path d="M2.500 2.500l28 28M30.500 2.500l-28 28" stroke="#c52233" strokeWidth="2.400" strokeLinecap="round" />
            </Svg>
          </div>
          <div className="mr-px size-[33px] bg-black" />
          <div className="mr-px size-[33px] bg-[#808080]" />
          <div className="mr-px size-[33px] bg-white" />
          <div className="flex flex-col gap-px">
            <Swatches colors={row1} />
            <Swatches colors={row2} />
          </div>
          <div className="flex h-8 items-center pl-1">
            <Svg className="mr-[11px] h-[10px] w-3" box="0 0 12 10">
              <path d="M.8 8L6 2.500 11.200 8" stroke="#7a7a7a" strokeWidth="2" />
            </Svg>
            <Svg className="mr-[9px] h-[10px] w-3" box="0 0 12 10">
              <path d="M.8 1.500L6 7l5.200-5.500" stroke={FG} strokeWidth="2" />
            </Svg>
            <div className="mt-[7px] flex w-[14px] flex-col gap-[3px]">
              <div className="h-[2px] bg-[#ededed]" />
              <div className="h-[2px] bg-[#ededed]" />
              <div className="h-[2px] bg-[#ededed]" />
            </div>
          </div>
        </div>

        <div className="flex h-[37px] shrink-0 items-center leading-[18px]">
          <div className="w-[48px] shrink-0 text-right">
            <div className="-ml-1 pr-[2px]">Fill:</div>
            <div className="-ml-1 pr-[2px]">Stroke:</div>
          </div>
          <div className="w-[118px] pl-8">
            <div>N/A</div>
            <div>N/A</div>
          </div>
          <div className="w-[20px]">O:</div>
          <Spin w="w-[73px]" h="h-[35px]" value="100" />
          <div className="ml-[11px] h-[18px] w-[3px] bg-[#b658c4]" />
          <div className="w-[83px] pl-[6px]">TechDraw</div>
          <Cell icon="eye" w="w-[32px]" />
          <Cell icon="lock" w="w-[44px]" />
          <Sep w="w-[2px]" />
          <div className="w-[401px] shrink-0 whitespace-nowrap">
            <div className="tracking-[0.12px]">No objects selected. Click, Shift+click, Alt+scroll mouse on</div>
            <div className="tracking-[0.12px]">top of objects, or drag around objects to select.</div>
          </div>
          <Sep w="w-[2px]" />
          <div className="flex w-[67px] shrink-0 justify-between pl-[2px]">
            <div>
              <div>X:</div>
              <div>Y:</div>
            </div>
            <div className="text-right">
              <div>28.69</div>
              <div>6.04</div>
            </div>
          </div>
          <div className="w-[28px] shrink-0 pl-[12px]">Z:</div>
          <Spin w="w-[91px]" h="h-[35px]" value="53%" valueClass="pl-[13px]" on />
          <div className="w-[27px] shrink-0 pl-[10px]">R:</div>
          <Spin w="w-[99px]" h="h-[35px]" value="0.00°" valueClass="pl-[16px]" on />
        </div>
      </div>
    </div>
  );
}
